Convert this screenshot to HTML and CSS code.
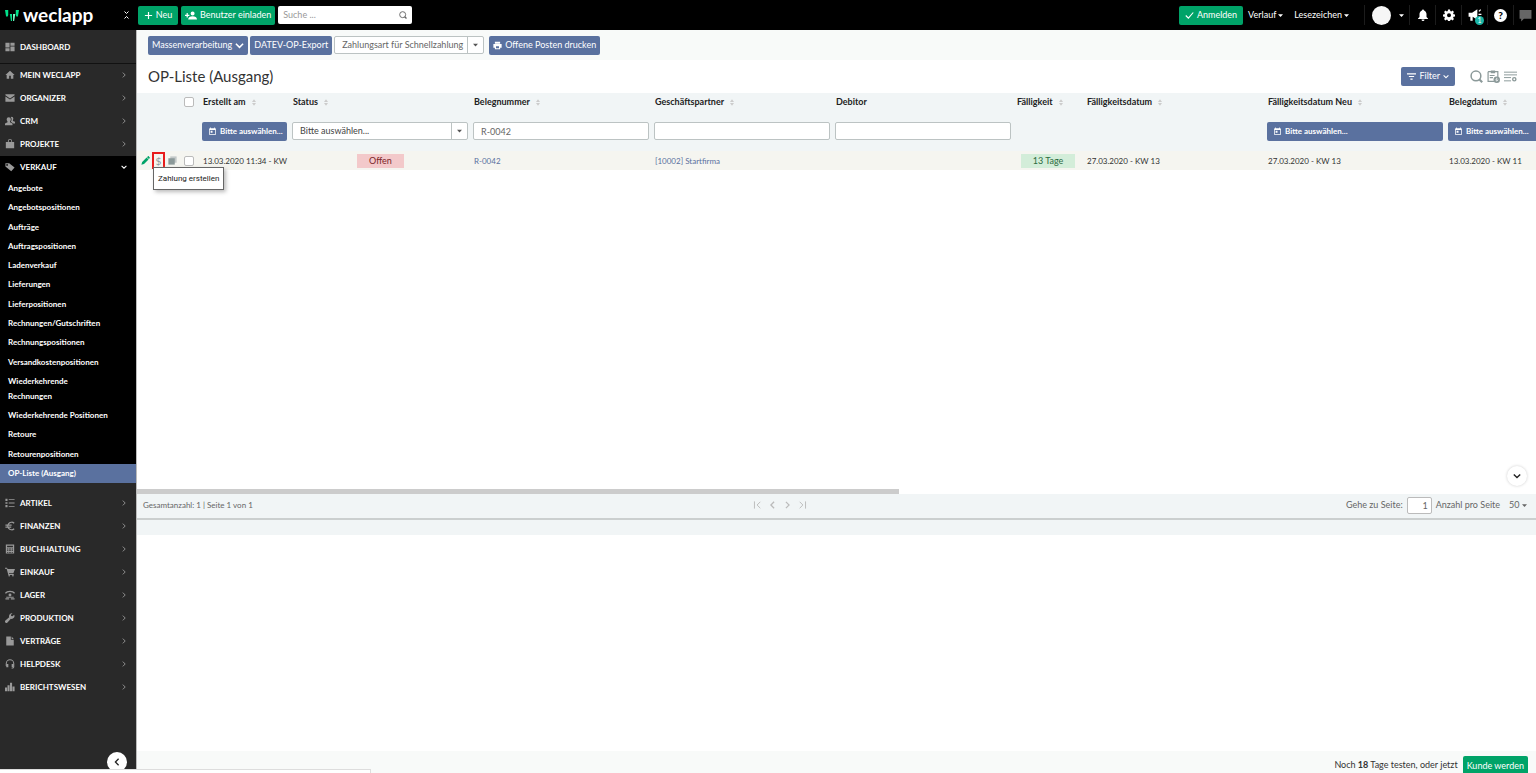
FILE: index.html
```html
<!DOCTYPE html>
<html lang="de">
<head>
<meta charset="utf-8">
<title>OP-Liste (Ausgang) – weclapp</title>
<link rel="stylesheet" href="styles.css">
</head>
<body>
<svg class="sprite" aria-hidden="true">
  <symbol id="chev-r" viewBox="0 0 10 10"><path d="M3 1l4 4-4 4" fill="none" stroke="currentColor" stroke-width="1.5"/></symbol>
  <symbol id="chev-l" viewBox="0 0 10 10"><path d="M7 1L3 5l4 4" fill="none" stroke="currentColor" stroke-width="1.6"/></symbol>
  <symbol id="chev-d" viewBox="0 0 10 10"><path d="M1 3l4 4 4-4" fill="none" stroke="currentColor" stroke-width="1.7"/></symbol>
  <symbol id="first" viewBox="0 0 10 10"><path d="M1.2 .5v9M8.5 1l-4 4 4 4" fill="none" stroke="currentColor" stroke-width="1.2"/></symbol>
  <symbol id="last" viewBox="0 0 10 10"><path d="M8.8 .5v9M1.5 1l4 4-4 4" fill="none" stroke="currentColor" stroke-width="1.2"/></symbol>
  <symbol id="caret" viewBox="0 0 10 10"><path d="M0 2.5h10L5 8z"/></symbol>
  <symbol id="sort" viewBox="0 0 10 16"><path d="M5 0l5 6.5H0zM5 16l5-6.500H0z"/></symbol>
  <symbol id="cal" viewBox="0 0 24 24"><path d="M19 3h-1V1h-2v2H8V1H6v2H5a2 2 0 0 0-2 2v14a2 2 0 0 0 2 2h14a2 2 0 0 0 2-2V5a2 2 0 0 0-2-2zm0 16H5V8h14zM7 10h5v5H7z"/></symbol>
  <symbol id="dash" viewBox="0 0 24 24"><path d="M1 2h10v11H1zM1 15h10v7H1zM13 2h10v7H13zM13 11h10v11H13z"/></symbol>
  <symbol id="home" viewBox="0 0 24 24"><path d="M12 2L1 12h3v9h6v-7h4v7h6v-9h3z"/></symbol>
  <symbol id="mail" viewBox="0 0 24 24"><path d="M1 3h22v2.500L12 13 1 5.500zM1 8.500l11 7 11-7V21H1z"/></symbol>
  <symbol id="people" viewBox="0 0 24 24"><path d="M9 3a5 5 0 0 1 5 5c0 2-1 4-2 5v2l6 3v4H0v-4l6-3v-2c-1-1-2-3-2-5a5 5 0 0 1 5-5zM16 2a4 4 0 0 1 4 4c0 2-1 3-1 4v2l5 2v4h-4l-6-4c2-3 3-8 0-11z"/></symbol>
  <symbol id="bag" viewBox="0 0 24 24"><path d="M7 7V5a5 5 0 0 1 10 0v2h5v15H2V7zm2 0h6V5a3 3 0 0 0-6 0z"/></symbol>
  <symbol id="tag" viewBox="0 0 24 24"><path fill-rule="evenodd" d="M1 3h9l13 10-8 9L1 11zm4 2a2 2 0 1 0 0 4 2 2 0 0 0 0-4z"/></symbol>
  <symbol id="list" viewBox="0 0 24 24"><path d="M1 2h5v5H1zM1 10h5v4H1zM1 17h5v5H1zM9 3h14v2H9zM9 11h14v2H9zM9 19h14v2H9z"/></symbol>
  <symbol id="euro" viewBox="0 0 24 24"><path d="M22 5.500A9 9 0 1 0 22 18.500M1 10h15M1 14.500h14" fill="none" stroke="currentColor" stroke-width="3"/></symbol>
  <symbol id="calc" viewBox="0 0 24 24"><path fill-rule="evenodd" d="M2 1h20v22H2zm3 3v4h14V4zM5 11v2h3v-2zm5 0v2h4v-2zm6 0v2h3v-2zM5 15v2h3v-2zm5 0v2h4v-2zm6 0v2h3v-2zM5 19v2h3v-2zm5 0v2h4v-2zm6 0v2h3v-2z"/></symbol>
  <symbol id="cart" viewBox="0 0 24 24"><path d="M0 2h5l1 3h18l-4 10H9l1 2h11v2H8L4 4H0z"/><circle cx="10" cy="21" r="2"/><circle cx="19" cy="21" r="2"/></symbol>
  <symbol id="store" viewBox="0 0 24 24"><path d="M1 8Q4 3 12 3t11 5" fill="none" stroke="currentColor" stroke-width="3"/><circle cx="12" cy="12" r="3.500"/><path d="M3 16h18v2.500H3zM1 20h9v3H1zM14 20h9v3h-9z"/></symbol>
  <symbol id="wrench" viewBox="0 0 24 24"><path d="M22 4l-4 4-3-1-1-3 4-3a7 7 0 0 0-8 9L1 18a3 3 0 0 0 5 5l8-9a7 7 0 0 0 8-10z"/></symbol>
  <symbol id="doc" viewBox="0 0 24 24"><path d="M3 1h11v8h7v14H3zM16 1l5 6h-5z"/></symbol>
  <symbol id="head" viewBox="0 0 24 24"><path d="M3 17v-6a9 9 0 0 1 18 0v8c0 2-2 3-5 3" fill="none" stroke="currentColor" stroke-width="2.500"/><path d="M3 12h5v8H3zM16 12h5v8h-5z"/></symbol>
  <symbol id="bars" viewBox="0 0 24 24"><path d="M0 13h5v9H0zM6 8h5v14H6zM12 2h5v20h-5zM18 11h5v11h-5z"/></symbol>
  <symbol id="search" viewBox="0 0 24 24"><circle cx="11" cy="11" r="9" fill="none" stroke="currentColor" stroke-width="2.800"/><path d="M17 17l5.500 5.500" stroke="currentColor" stroke-width="4"/></symbol>
</svg>

<header class="topbar">
  <div class="brand">
    <a class="logo" href="#"><svg viewBox="0 0 26 22" aria-hidden="true"><path fill="#00e08a" d="M0 1h6v9l-1 3H2zM9 8h4v13h-2zM20 1h6l-2 12h-3l-1-3z"/><path fill="#7dffc8" d="M15 8h4l-2 13h-2z"/></svg>weclapp</a>
    <svg class="toggle" viewBox="0 0 10 16" aria-hidden="true"><path d="M1 1l4 4 4-4M1 15l4-4 4 4" fill="none" stroke="#fff" stroke-width="2"/></svg>
  </div>
  <button class="btn green"><svg viewBox="0 0 10 10"><path d="M5 1v8M1 5h8" stroke="#fff" stroke-width="1.300"/></svg>Neu</button>
  <button class="btn green"><svg class="wide" viewBox="0 0 30 22"><path fill="#fff" d="M19 1a5 5 0 1 1 0 10 5 5 0 0 1 0-10zM8 21c0-5 5-8 11-8s11 3 11 8zM4 5h3v4h4v3H7v4H4v-4H0V9h4z"/></svg>Benutzer einladen</button>
  <label class="search"><input type="text" placeholder="Suche ..." aria-label="Suche"><svg><use href="#search"/></svg></label>
  <div class="topright">
    <button class="btn green login"><svg viewBox="0 0 12 10"><path d="M1 5l3.500 3.500L11 1" fill="none" stroke="#fff" stroke-width="1.500"/></svg>Anmelden</button>
    <a class="toplink" href="#">Verlauf<svg><use href="#caret"/></svg></a>
    <a class="toplink" href="#">Lesezeichen<svg><use href="#caret"/></svg></a>
    <button class="tool user" aria-label="Benutzer"><span class="avatar"></span><svg class="mini"><use href="#caret"/></svg></button>
    <button class="tool" aria-label="Benachrichtigungen"><svg viewBox="0 0 24 24"><path d="M12 1c1 0 2 1 2 2 3 1 5 4 5 7v6l3 3v1H2v-1l3-3v-6c0-3 2-6 5-7 0-1 1-2 2-2zM9 21h6a3 3 0 0 1-6 0z"/></svg></button>
    <button class="tool" aria-label="Einstellungen"><svg viewBox="0 0 24 24"><path fill-rule="evenodd" d="M10 1h4l.6 3 2 .9 2.600-1.700 2.700 2.800-1.700 2.500.8 2 3 .5v3.900l-3 .6-.8 2 1.700 2.600-2.700 2.700-2.600-1.700-2 .8-.6 3h-4l-.5-3-2-.8-2.600 1.700-2.800-2.700 1.800-2.600-.9-2-3-.6V11l3-.5.9-2L2.100 6l2.800-2.800 2.600 1.700 2-.9zm2 7.500a4 4 0 1 0 0 8 4 4 0 0 0 0-8z"/></svg></button>
    <button class="tool news" aria-label="Neuigkeiten"><svg viewBox="0 0 24 24"><path d="M1 8h6l9-6v18l-8-5v7H4v-7H1zM18 5l3-3 1.500 1.500-3 3zM18 10h5v2h-5z"/></svg><span class="badge">1</span></button>
    <button class="tool" aria-label="Hilfe"><span class="help">?</span></button>
    <button class="tool chat" aria-label="Chat"><svg viewBox="0 0 24 24"><path d="M1 2h22v16H9l-5 5v-5H1z"/></svg></button>
  </div>
</header>

<div class="body">
  <aside class="side">
    <nav>
      <a class="item first" href="#"><svg><use href="#dash"/></svg>DASHBOARD</a>
      <a class="item" href="#"><svg><use href="#home"/></svg>MEIN WECLAPP<svg class="arrow"><use href="#chev-r"/></svg></a>
      <a class="item" href="#"><svg><use href="#mail"/></svg>ORGANIZER<svg class="arrow"><use href="#chev-r"/></svg></a>
      <a class="item" href="#"><svg><use href="#people"/></svg>CRM<svg class="arrow"><use href="#chev-r"/></svg></a>
      <a class="item" href="#"><svg><use href="#bag"/></svg>PROJEKTE<svg class="arrow"><use href="#chev-r"/></svg></a>
      <a class="item open" href="#"><svg><use href="#tag"/></svg>VERKAUF<svg class="arrow"><use href="#chev-d"/></svg></a>
      <div class="sub">
        <a href="#">Angebote</a>
        <a href="#">Angebotspositionen</a>
        <a href="#">Aufträge</a>
        <a href="#">Auftragspositionen</a>
        <a href="#">Ladenverkauf</a>
        <a href="#">Lieferungen</a>
        <a href="#">Lieferpositionen</a>
        <a href="#">Rechnungen/Gutschriften</a>
        <a href="#">Rechnungspositionen</a>
        <a href="#">Versandkostenpositionen</a>
        <a href="#">Wiederkehrende<br>Rechnungen</a>
        <a href="#">Wiederkehrende Positionen</a>
        <a href="#">Retoure</a>
        <a href="#">Retourenpositionen</a>
        <a class="active" href="#">OP-Liste (Ausgang)</a>
      </div>
      <a class="item" href="#"><svg><use href="#list"/></svg>ARTIKEL<svg class="arrow"><use href="#chev-r"/></svg></a>
      <a class="item" href="#"><svg><use href="#euro"/></svg>FINANZEN<svg class="arrow"><use href="#chev-r"/></svg></a>
      <a class="item" href="#"><svg><use href="#calc"/></svg>BUCHHALTUNG<svg class="arrow"><use href="#chev-r"/></svg></a>
      <a class="item" href="#"><svg><use href="#cart"/></svg>EINKAUF<svg class="arrow"><use href="#chev-r"/></svg></a>
      <a class="item" href="#"><svg><use href="#store"/></svg>LAGER<svg class="arrow"><use href="#chev-r"/></svg></a>
      <a class="item" href="#"><svg><use href="#wrench"/></svg>PRODUKTION<svg class="arrow"><use href="#chev-r"/></svg></a>
      <a class="item" href="#"><svg><use href="#doc"/></svg>VERTRÄGE<svg class="arrow"><use href="#chev-r"/></svg></a>
      <a class="item" href="#"><svg><use href="#head"/></svg>HELPDESK<svg class="arrow"><use href="#chev-r"/></svg></a>
      <a class="item" href="#"><svg><use href="#bars"/></svg>BERICHTSWESEN<svg class="arrow"><use href="#chev-r"/></svg></a>
    </nav>
    <button class="round collapse" aria-label="Menü einklappen"><svg><use href="#chev-l"/></svg></button>
  </aside>

  <main class="main">
    <div class="toolbar">
      <button class="btn blue">Massenverarbeitung<svg><use href="#chev-d"/></svg></button>
      <button class="btn blue">DATEV-OP-Export</button>
      <span class="select pay"><select aria-label="Zahlungsart"><option>Zahlungsart für Schnellzahlung</option></select><svg><use href="#caret"/></svg></span>
      <button class="btn blue print"><svg viewBox="0 0 24 24"><path fill="#fff" fill-rule="evenodd" d="M5 2h14v5H5zM1 8h22v10h-4v4H5v-4H1zm7 6v5h8v-5z"/></svg>Offene Posten drucken</button>
    </div>

    <div class="titlebar">
      <h1>OP-Liste (Ausgang)</h1>
      <button class="btn blue filter"><svg viewBox="0 0 12 10"><path d="M0 1.500h12M2.500 5h7M4.500 8.500h3" stroke="#fff" stroke-width="1.500"/></svg>Filter<svg class="small"><use href="#chev-d"/></svg></button>
      <div class="views">
        <svg><use href="#search"/></svg>
        <svg viewBox="0 0 24 24"><path d="M2 3h18v10M2 3v18h11" fill="none" stroke="currentColor" stroke-width="2.200"/><path d="M7 1h8v5H7zM5 9h9v2H5zM5 13h6v2H5z"/><circle cx="18" cy="18" r="6"/><path d="M18 14.500v5M15.500 18l2.500 2.500 2.500-2.500" fill="none" stroke="#fff" stroke-width="1.500"/></svg>
        <svg viewBox="0 0 24 24"><path d="M0 4h24M0 9h24M0 14h13M0 20h13" stroke="currentColor" stroke-width="1.800"/><circle cx="19" cy="17" r="3" fill="none" stroke="currentColor" stroke-width="2.500"/></svg>
      </div>
    </div>

    <div class="listing">
      <table class="grid">
        <colgroup><col class="c-act"><col class="c-date"><col class="c-std"><col class="c-std"><col class="c-std"><col class="c-std"><col class="c-due"><col class="c-std"><col class="c-std"><col class="c-std"></colgroup>
        <thead>
          <tr class="heads">
            <th class="pick"><input type="checkbox" aria-label="Alle auswählen"></th>
            <th>Erstellt am<svg><use href="#sort"/></svg></th>
            <th>Status<svg><use href="#sort"/></svg></th>
            <th>Belegnummer<svg><use href="#sort"/></svg></th>
            <th>Geschäftspartner<svg><use href="#sort"/></svg></th>
            <th>Debitor</th>
            <th>Fälligkeit<svg><use href="#sort"/></svg></th>
            <th>Fälligkeitsdatum<svg><use href="#sort"/></svg></th>
            <th>Fälligkeitsdatum Neu<svg><use href="#sort"/></svg></th>
            <th>Belegdatum<svg><use href="#sort"/></svg></th>
          </tr>
          <tr class="filters">
            <td></td>
            <td><button class="btn blue date"><svg><use href="#cal"/></svg>Bitte auswählen...</button></td>
            <td><span class="select"><select aria-label="Status"><option>Bitte auswählen...</option></select><svg><use href="#caret"/></svg></span></td>
            <td><input type="text" value="R-0042" aria-label="Belegnummer"></td>
            <td><input type="text" aria-label="Geschäftspartner"></td>
            <td><input type="text" aria-label="Debitor"></td>
            <td></td>
            <td></td>
            <td><button class="btn blue date"><svg><use href="#cal"/></svg>Bitte auswählen...</button></td>
            <td><button class="btn blue date"><svg><use href="#cal"/></svg>Bitte auswählen...</button></td>
          </tr>
        </thead>
        <tbody>
          <tr>
            <td>
              <div class="actions">
                <button class="icon edit" aria-label="Bearbeiten"><svg viewBox="0 0 24 24"><path d="M1 23l2-7L15 4l5 5L8 21zM16 3l2-2c1-1 2-1 3 0l2 2c1 1 1 2 0 3l-2 2z"/></svg></button>
                <span class="marked"><button class="icon money" aria-label="Zahlung erstellen">$</button><span class="tip" role="tooltip">Zahlung erstellen</span></span>
                <button class="icon copy" aria-label="Kopieren"><svg viewBox="0 0 24 24"><path fill="#c3c8c8" d="M6 1h17v17H6z"/><path d="M1 6h17v17H1z"/></svg></button>
                <input type="checkbox" aria-label="Zeile auswählen">
              </div>
            </td>
            <td>13.03.2020 11:34 - KW</td>
            <td><span class="pill red">Offen</span></td>
            <td><a href="#">R-0042</a></td>
            <td><a href="#">[10002] Startfirma</a></td>
            <td></td>
            <td><span class="pill lime">13 Tage</span></td>
            <td>27.03.2020 - KW 13</td>
            <td>27.03.2020 - KW 13</td>
            <td>13.03.2020 - KW 11</td>
          </tr>
        </tbody>
      </table>
      <button class="round down" aria-label="Nach unten"><svg><use href="#chev-d"/></svg></button>
    </div>
    <div class="scroll"><div class="thumb"></div></div>
    <div class="pager">
      <span class="total">Gesamtanzahl: 1 | Seite 1 von 1</span>
      <div class="pages">
        <button class="icon" aria-label="Erste Seite"><svg><use href="#first"/></svg></button>
        <button class="icon" aria-label="Vorherige Seite"><svg><use href="#chev-l"/></svg></button>
        <button class="icon" aria-label="Nächste Seite"><svg><use href="#chev-r"/></svg></button>
        <button class="icon" aria-label="Letzte Seite"><svg><use href="#last"/></svg></button>
      </div>
      <div class="goto">
        <label for="page">Gehe zu Seite:</label>
        <input id="page" type="text" value="1">
        <label for="size">Anzahl pro Seite</label>
        <span class="size"><select id="size"><option>50</option></select><svg><use href="#caret"/></svg></span>
      </div>
    </div>
    <div class="strip"></div>
    <div class="detail"></div>
    <footer class="trial">
      <span>Noch <b>18</b> Tage testen, oder jetzt</span>
      <button class="btn green">Kunde werden</button>
    </footer>
  </main>
</div>
<div class="linkbar"></div>
</body>
</html>
```

FILE: styles.css
```css
* { box-sizing: border-box; }
body {
  margin: 0;
  height: 100vh;
  display: flex;
  flex-direction: column;
  overflow: hidden;
  font: 8px/12px Lato, "Liberation Sans", sans-serif;
  color: #333;
  background: #fff;
}
a { color: inherit; text-decoration: none; }
button, input, select { font: inherit; color: inherit; margin: 0; }
button { border: 0; background: none; padding: 0; }
svg { fill: currentColor; flex: none; }
.sprite { display: none; }

.btn {
  display: inline-flex;
  align-items: center;
  justify-content: center;
  gap: 3px;
  height: 19px;
  padding: 0 4px;
  border-radius: 2px;
  color: #fff;
  font-size: 9px;
  white-space: nowrap;
}
.btn svg { width: 9px; height: 9px; }
.btn svg.wide { width: 12px; }
.btn svg.small { width: 6px; }
.green { background: #00a368; min-width: 40px; }
.blue { background: #5a719f; }

/* top bar */
.topbar {
  flex: none;
  height: 30px;
  background: #000;
  color: #fff;
  display: flex;
  align-items: center;
  gap: 3px;
  font-size: 9px;
}
.brand {
  width: 135px;
  padding: 0 6px 0 5px;
  display: flex;
  align-items: center;
  justify-content: space-between;
}
.logo {
  display: flex;
  align-items: center;
  gap: 4px;
  font: 700 19px/24px Lato, sans-serif;
}
.logo svg { width: 14px; height: 13px; }
.toggle { width: 5px; height: 8px; }
.search {
  display: flex;
  align-items: center;
  width: 134px;
  height: 18px;
  padding: 0 5px;
  background: #fff;
  border-radius: 2px;
  color: #666;
}
.search input {
  flex: 1;
  min-width: 0;
  border: 0;
  padding: 0;
  outline: 0;
  background: none;
}
.search input::placeholder { color: #999; }
.search svg { width: 8px; height: 8px; }
.topright {
  margin-left: auto;
  display: flex;
  align-items: center;
}
.login { padding: 0 6px; }
.toplink {
  display: flex;
  align-items: center;
  gap: 2px;
  margin-left: 5px;
  padding-right: 6px;
}
.toplink svg { width: 5px; height: 5px; }
.tool {
  position: relative;
  display: flex;
  align-items: center;
  justify-content: center;
  width: 26px;
  height: 20px;
  border-left: 1px solid #1c1c1c;
  color: #fff;
}
.tool svg { width: 12px; height: 12px; }
.user { width: 45px; gap: 8px; margin-left: 9px; padding-left: 2px; }
.tool .mini { width: 5px; height: 5px; }
.avatar { width: 19px; height: 19px; border-radius: 50%; background: #f6f6f6; }
.tool.news svg { width: 14px; height: 14px; }
.badge {
  position: absolute;
  right: 3px;
  bottom: 0;
  width: 9px;
  height: 9px;
  border-radius: 50%;
  background: #1bb5a5;
  font-size: 7px;
  line-height: 9px;
}
.help {
  width: 13px;
  height: 13px;
  border-radius: 50%;
  background: #fff;
  color: #000;
  font: 900 10px/13px Lato, sans-serif;
}
.chat { width: 23px; color: #666; }
.tool.chat svg { width: 13px; height: 13px; }

.body { flex: 1; display: flex; min-height: 0; }

/* sidebar */
.side {
  position: relative;
  flex: none;
  width: 137px;
  background: #292929;
  border-right: 1px solid #bbb;
  color: #fff;
  font-weight: 700;
}
.item {
  display: flex;
  align-items: center;
  gap: 5px;
  height: 23px;
  padding: 0 9px 1px 5px;
}
.item svg { width: 10px; height: 10px; color: #999; }
.item .arrow { width: 6px; height: 6px; margin-left: auto; }
.first { height: 34px; padding-bottom: 0; border-bottom: 1px solid #111; }
.open { background: #000; }
.open .arrow { color: #fff; }
.sub {
  min-height: 304px;
  margin-bottom: 9px;
  display: flex;
  flex-direction: column;
  justify-content: space-between;
  background: #000;
}
.sub a { padding: 2px 8px; line-height: 15px; }
.sub .active { background: #5a719f; }
.round {
  position: absolute;
  display: flex;
  align-items: center;
  justify-content: center;
  width: 20px;
  height: 20px;
  border-radius: 50%;
  background: #fff;
  color: #222;
}
.round svg { width: 8px; height: 8px; }
.collapse { right: 9px; bottom: 1px; }

/* content */
.main { flex: 1; min-width: 0; display: flex; flex-direction: column; }
.toolbar {
  flex: none;
  display: flex;
  align-items: center;
  gap: 2px;
  height: 30px;
  padding-left: 11px;
  background: #f8faf9;
}
.select { position: relative; display: block; }
.select select, .filters input {
  display: block;
  appearance: none;
  width: 100%;
  height: 18px;
  padding: 0 7px;
  border: 1px solid #bcc3c3;
  border-radius: 2px;
  background: #fff;
  color: #666;
  font-size: 9px;
  outline: 0;
}
.select svg {
  position: absolute;
  top: 1px;
  right: 1px;
  width: 16px;
  height: 16px;
  padding: 5px;
  border-left: 1px solid #bcc3c3;
  color: #555;
  pointer-events: none;
}
.pay { width: 150px; }
.print { margin-left: 3px; }

.titlebar {
  flex: none;
  display: flex;
  align-items: center;
  height: 33px;
  padding: 0 19px 1px 11px;
}
h1 { flex: 1; margin: 0; font-size: 15px; line-height: 20px; font-weight: 400; }
.filter { padding: 0 6px; }
.views { display: flex; gap: 4px; margin-left: 15px; color: #8b9999; }
.views svg { width: 13px; height: 13px; }

.listing { position: relative; flex: 11 1 0; min-height: 0; overflow: hidden; }
.grid { table-layout: fixed; width: 1492px; border-collapse: collapse; }
.c-act { width: 65px; }
.c-date { width: 90px; }
.c-std { width: 181px; }
.c-due { width: 70px; }
.grid th, .grid td { padding: 0 0 0 1px; text-align: left; white-space: nowrap; }
thead { background: #f1f5f6; }
th { color: #222; font-size: 9px; }
.heads { height: 18px; }
th svg { width: 4px; height: 7px; margin-left: 6px; color: #ccc; vertical-align: -1px; }
.grid .pick { padding-left: 47px; }
.grid input[type="checkbox"] {
  appearance: none;
  display: block;
  width: 10px;
  height: 10px;
  border: 1px solid #bbb;
  border-radius: 2px;
  background: #fff;
}
.filters { height: 40px; }
.grid .filters td { padding: 0 5px 0 0; }
.filters .select select { color: #444; }
.date { width: 100%; justify-content: flex-start; padding: 0 6px; font-size: 8px; font-weight: 700; }
tbody tr { height: 19px; background: #f5f5f0; }
tbody a { color: #5a719f; }
.actions { display: flex; align-items: center; }
.icon { display: flex; align-items: center; justify-content: center; color: #8b9999; }
.icon svg { width: 9px; height: 9px; }
.edit { width: 14px; color: #00a368; }
.copy { width: 14px; margin-right: 5px; }
.marked {
  position: relative;
  width: 13px;
  height: 17px;
  border: 2px solid #e81c1c;
  display: flex;
  align-items: center;
  justify-content: center;
}
.money { font-size: 10px; }
.tip {
  position: absolute;
  z-index: 2;
  top: 13px;
  left: -1px;
  padding: 5px 4px 4px;
  border: 1px solid #666;
  background: #fff;
  box-shadow: 2px 2px 4px #bbb;
  font: 8px/12px Roboto, sans-serif;
  color: #222;
}
.pill { display: block; width: 54px; line-height: 14px; text-align: center; font-size: 9px; }
.red { width: 47px; margin-left: 64px; background: #f3c9ca; color: #7c2529; }
.lime { margin-left: 4px; background: #d3edd9; color: #2c6b3f; }
.down { right: 9px; bottom: 3px; box-shadow: 0 0 3px #ccc; }

.scroll { flex: none; background: #fff; }
.thumb { width: 54.5%; height: 5px; background: #ccc; }
.pager {
  flex: none;
  display: grid;
  grid-template-columns: 11fr auto 13fr;
  align-items: center;
  height: 26px;
  padding: 0 9px 2px 6px;
  background: #f1f5f6;
  border-bottom: 2px solid #cbcfcf;
  color: #666;
}
.pages { display: flex; gap: 6px; }
.pages .icon { color: #bbb; }
.pages svg { height: 8px; }
.goto { display: flex; align-items: center; justify-content: flex-end; gap: 4px; font-size: 9px; }
.goto input {
  width: 25px;
  height: 17px;
  padding: 0 3px;
  border: 1px solid #bbb;
  border-radius: 2px;
  background: #fff;
  text-align: right;
}
.size { display: flex; align-items: center; gap: 2px; margin-left: 5px; }
.size select { appearance: none; border: 0; padding: 0; background: none; }
.size svg { width: 5px; height: 5px; }
.strip { flex: none; height: 15px; background: #f1f5f6; }
.detail { flex: 6 1 0; }
.trial {
  flex: none;
  display: flex;
  align-items: flex-start;
  justify-content: flex-end;
  gap: 5px;
  height: 22px;
  padding: 5px 8px 0 0;
  background: #f8faf9;
  font-size: 9px;
  line-height: 18px;
}
.linkbar {
  position: fixed;
  left: 0;
  bottom: 0;
  width: 371px;
  height: 4px;
  background: #fff;
  border: 1px solid #ddd;
  border-width: 1px 1px 0 0;
}
```
